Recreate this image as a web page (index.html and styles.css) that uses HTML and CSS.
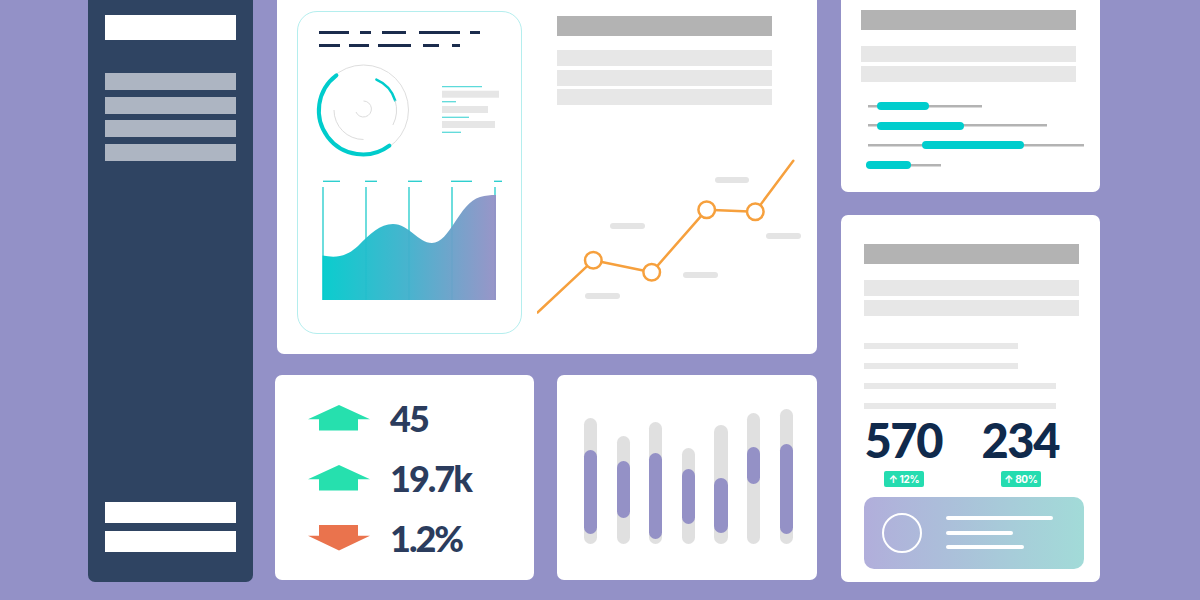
FILE: index.html
```html
<!DOCTYPE html>
<html lang="en">
<head>
<meta charset="utf-8">
<title>Dashboard</title>
<link rel="stylesheet" href="styles.css">
</head>
<body>
<div class="board">
  <aside class="sidebar">
    <div class="sb-logo"></div>
    <nav class="sb-menu"><span></span><span></span><span></span><span></span></nav>
    <div class="sb-foot"><span></span><span></span></div>
  </aside>

  <main class="center">
    <section class="card overview">
      <div class="tablet">
        <svg class="tab-head" viewBox="298 12 223 48" width="223" height="48">
          <g stroke="#1b2c4d" stroke-width="3">
            <line x1="319" y1="32.5" x2="349" y2="32.5"/>
            <line x1="360" y1="32.5" x2="371" y2="32.5"/>
            <line x1="382" y1="32.5" x2="406" y2="32.5"/>
            <line x1="419" y1="32.5" x2="460" y2="32.5"/>
            <line x1="470" y1="32.5" x2="480" y2="32.5"/>
            <line x1="319" y1="45.5" x2="340" y2="45.5"/>
            <line x1="349" y1="45.5" x2="369" y2="45.5"/>
            <line x1="378" y1="45.5" x2="411" y2="45.5"/>
            <line x1="423" y1="45.5" x2="439" y2="45.5"/>
            <line x1="452" y1="45.5" x2="460" y2="45.5"/>
          </g>
        </svg>
        <svg class="tab-donut" viewBox="298 60 223 110" width="223" height="110">
          <circle cx="363.5" cy="110" r="45" fill="none" stroke="#dedede" stroke-width="1"/>
          <path d="M389.4 145.6 A44 44 0 0 1 336.4 75.3" fill="none" stroke="#00cccc" stroke-width="4" stroke-linecap="round"/>
          <path d="M376.4 79.6 A33 33 0 0 1 395.1 100.4" fill="none" stroke="#00cccc" stroke-width="2.5" stroke-linecap="round"/>
          <path d="M395.1 100.4 A33 33 0 0 1 392.9 125" fill="none" stroke="#dcdcdc" stroke-width="1"/>
          <path d="M363.5 139.5 A29.5 29.5 0 0 1 334 110" fill="none" stroke="#dcdcdc" stroke-width="1"/>
          <path d="M363.5 101 A8 8 0 1 1 356 112" fill="none" stroke="#dcdcdc" stroke-width="1"/>
          <g stroke="#5cdada" stroke-width="1.3">
            <line x1="442" y1="86.7" x2="482" y2="86.7"/>
            <line x1="442" y1="101.7" x2="456" y2="101.7"/>
            <line x1="442" y1="117.3" x2="469" y2="117.3"/>
            <line x1="442" y1="132.3" x2="461" y2="132.3"/>
          </g>
          <g fill="#e6e6e6">
            <rect x="442" y="90.7" width="57" height="7"/>
            <rect x="442" y="106" width="46" height="7"/>
            <rect x="442" y="121" width="53" height="7"/>
          </g>
        </svg>
        <svg class="tab-area" viewBox="298 170 223 145" width="223" height="145">
          <defs>
            <linearGradient id="areaFill" x1="0" y1="0" x2="1" y2="0">
              <stop offset="0" stop-color="#00cbcc"/>
              <stop offset="0.5" stop-color="#42b0cc"/>
              <stop offset="1" stop-color="#9591c6"/>
            </linearGradient>
          </defs>
          <g stroke="#2ecfcf" stroke-width="1.4">
            <line x1="323" y1="181.3" x2="340" y2="181.3"/>
            <line x1="365" y1="181.3" x2="377" y2="181.3"/>
            <line x1="408" y1="181.3" x2="422" y2="181.3"/>
            <line x1="451" y1="181.3" x2="472" y2="181.3"/>
            <line x1="494" y1="181.3" x2="502" y2="181.3"/>
            <line x1="323" y1="187" x2="323" y2="300"/>
            <line x1="366" y1="187" x2="366" y2="300"/>
            <line x1="409" y1="187" x2="409" y2="300"/>
            <line x1="452" y1="187" x2="452" y2="300"/>
            <line x1="495" y1="187" x2="495" y2="300"/>
          </g>
          <path d="M322.5 300 V255.5 C336 258 346 257 358 246 C370 234 380 224 393 224 C409 224 418 243 432 243 C450 243 459 203 480 197 C486 195.5 490 195 496 195 V300 Z" fill="url(#areaFill)" opacity="0.96"/>
        </svg>
      </div>

      <div class="trend">
        <div class="title-bar"></div>
        <div class="lines"><span></span><span></span><span></span></div>
        <svg class="trend-chart" viewBox="537 155 265 162" width="265" height="162">
          <g fill="#e4e4e4">
            <rect x="715" y="177" width="34" height="6" rx="3"/>
            <rect x="610" y="223" width="35" height="6" rx="3"/>
            <rect x="766" y="233" width="35" height="6" rx="3"/>
            <rect x="683" y="272" width="35" height="6" rx="3"/>
            <rect x="585" y="293" width="35" height="6" rx="3"/>
          </g>
          <polyline points="537.5,312.5 593.3,260.3 651.7,272.3 706.7,209.7 755.3,211.7 793.3,160.7" fill="none" stroke="#f6a03d" stroke-width="2.5" stroke-linecap="round" stroke-linejoin="round"/>
          <g fill="#fff" stroke="#f6a03d" stroke-width="2.5">
            <circle cx="593.3" cy="260.3" r="8.3"/>
            <circle cx="651.7" cy="272.3" r="8.3"/>
            <circle cx="706.7" cy="209.7" r="8.3"/>
            <circle cx="755.3" cy="211.7" r="8.3"/>
          </g>
        </svg>
      </div>
    </section>

    <div class="center-row">
      <section class="card stats">
        <div class="stat">
          <svg viewBox="0 0 62 26" width="62" height="26"><polygon points="31,0 62,14.3 50,14.3 50,25.6 11,25.6 11,14.3 0,14.3" fill="#26e0ae"/></svg>
          <b>45</b>
        </div>
        <div class="stat">
          <svg viewBox="0 0 62 26" width="62" height="26"><polygon points="31,0 62,14.3 50,14.3 50,25.6 11,25.6 11,14.3 0,14.3" fill="#26e0ae"/></svg>
          <b>19.7k</b>
        </div>
        <div class="stat">
          <svg viewBox="0 0 62 26" width="62" height="26"><polygon points="11,0 50,0 50,10.7 62,10.7 31,25.5 0,10.7 11,10.7" fill="#ea734d"/></svg>
          <b>1.2%</b>
        </div>
      </section>

      <section class="card bars">
        <div class="track" style="height:126px"><i style="margin-top:32px;height:84px"></i></div>
        <div class="track" style="height:108px"><i style="margin-top:25px;height:57px"></i></div>
        <div class="track" style="height:122px"><i style="margin-top:31px;height:86px"></i></div>
        <div class="track" style="height:96px"><i style="margin-top:21px;height:55px"></i></div>
        <div class="track" style="height:119px"><i style="margin-top:53px;height:55px"></i></div>
        <div class="track" style="height:131px"><i style="margin-top:34px;height:37px"></i></div>
        <div class="track" style="height:135px"><i style="margin-top:35px;height:90px"></i></div>
      </section>
    </div>
  </main>

  <div class="right">
    <section class="card progress">
      <div class="title-bar"></div>
      <div class="lines"><span></span><span></span></div>
      <div class="sliders">
        <div class="slider" style="width:114px"><i style="margin-left:9px;width:52px"></i></div>
        <div class="slider" style="width:179px"><i style="margin-left:9px;width:87px"></i></div>
        <div class="slider" style="width:216px"><i style="margin-left:54px;width:102px"></i></div>
        <div class="slider" style="width:75px;margin-left:-2px"><i style="margin-left:0;width:45px"></i></div>
      </div>
    </section>

    <section class="card summary">
      <div class="title-bar"></div>
      <div class="lines"><span></span><span></span></div>
      <div class="thin"><span class="short"></span><span class="short"></span><span></span><span></span></div>
      <div class="kpis">
        <div class="kpi"><b>570</b><span class="badge">↑ 12%</span></div>
        <div class="kpi"><b>234</b><span class="badge">↑ 80%</span></div>
      </div>
      <div class="profile">
        <div class="avatar"></div>
        <div class="profile-lines"><span class="l1"></span><span class="l2"></span><span class="l3"></span></div>
      </div>
    </section>
  </div>
</div>
</body>
</html>
```

FILE: styles.css
```css
html, body {
  margin: 0;
  height: 600px;
  overflow: hidden;
  background: #9391c7;
  font-family: Inter, "Noto Sans", sans-serif;
}

svg { display: block; }

.board {
  display: grid;
  grid-template-columns: 165px 540px 259px;
  column-gap: 24px;
  align-items: start;
  margin: -20px 0 0 88px;
}

/* Sidebar */
.sidebar {
  height: 602px;
  box-sizing: border-box;
  background: #2f4462;
  border-radius: 0 0 7px 7px;
  padding: 35px 17px 30px;
  display: flex;
  flex-direction: column;
}
.sb-logo { height: 25px; background: #fff; }
.sb-menu {
  margin-top: 33px;
  display: flex;
  flex-direction: column;
  gap: 6.5px;
}
.sb-menu span { height: 17px; background: #adb5c2; }
.sb-foot {
  margin-top: auto;
  display: flex;
  flex-direction: column;
  gap: 8px;
}
.sb-foot span { height: 21px; background: #fff; }

/* Cards */
.card {
  background: #fff;
  border-radius: 7px;
  box-sizing: border-box;
}

.center {
  display: flex;
  flex-direction: column;
  gap: 21px;
}

.overview {
  height: 374px;
  display: flex;
  align-items: flex-start;
  gap: 15px;
  padding: 31px 0 0 20px;
}

.tablet {
  width: 225px;
  height: 323px;
  box-sizing: border-box;
  border: 1px solid #b4eeee;
  border-radius: 20px;
  display: flex;
  flex-direction: column;
}

.trend {
  width: 265px;
  display: flex;
  flex-direction: column;
}
.title-bar {
  width: 215px;
  height: 20px;
  background: #b3b3b3;
}
.trend .title-bar { margin: 5px 0 0 20px; }
.lines {
  width: 215px;
  display: flex;
  flex-direction: column;
  gap: 3.5px;
}
.lines span { height: 16px; background: #e7e7e7; }
.trend .lines { margin: 14px 0 0 20px; }
.trend-chart { margin-top: 50px; }

.center-row {
  display: flex;
  gap: 23px;
  margin-left: -2px;
}

/* Stats */
.stats {
  width: 259px;
  height: 205px;
  padding: 25px 0 0 33px;
  display: flex;
  flex-direction: column;
  gap: 24px;
}
.stat {
  height: 36px;
  display: flex;
  align-items: center;
  gap: 20px;
}
.stat b {
  font-family: Lato, Inter, sans-serif;
  font-size: 36px;
  line-height: 1;
  font-weight: 900;
  color: #2b3c5d;
  letter-spacing: -2px;
}

/* Bars */
.bars {
  width: 260px;
  height: 205px;
  padding: 0 0 36px 27px;
  display: flex;
  align-items: flex-end;
  gap: 19.3px;
}
.track {
  width: 13.3px;
  border-radius: 7px;
  background: #e0e0e0;
  display: flex;
  flex-direction: column;
}
.track i {
  display: block;
  border-radius: 7px;
  background: #9491c6;
}

/* Right column */
.right {
  display: flex;
  flex-direction: column;
  gap: 23px;
}

.progress {
  height: 212px;
  padding: 30px 0 0 20px;
}
.progress .lines { margin-top: 16px; gap: 4px; }
.sliders {
  margin-top: 20px;
  padding-left: 7px;
  display: flex;
  flex-direction: column;
  gap: 11.7px;
}
.slider {
  height: 8px;
  background: linear-gradient(#b3b3b3, #b3b3b3) center / 100% 2.5px no-repeat;
  display: flex;
}
.slider i {
  display: block;
  height: 8px;
  border-radius: 4px;
  background: #00cdcd;
}

.summary {
  height: 367px;
  padding: 29px 21px 0 23px;
  display: flex;
  flex-direction: column;
}
.summary .title-bar { height: 19.5px; }
.summary .lines { margin-top: 16px; gap: 4px; }
.thin {
  margin-top: 27px;
  display: flex;
  flex-direction: column;
  gap: 14px;
}
.thin span { height: 6px; width: 192px; background: #e8e8e8; }
.thin span.short { width: 154px; }

.kpis {
  margin-top: 7px;
  display: flex;
  gap: 37px;
}
.kpi {
  width: 80px;
  display: flex;
  flex-direction: column;
  align-items: center;
}
.kpi b {
  font-family: Lato, Inter, sans-serif;
  font-size: 47px;
  line-height: 1;
  font-weight: 900;
  color: #102a4c;
  letter-spacing: -1.5px;
  text-indent: -1.5px;
  white-space: nowrap;
  position: relative;
  top: 1px;
}
.badge {
  margin-top: 8px;
  width: 40px;
  height: 16px;
  border-radius: 2px;
  background: #25dcb0;
  color: #fff;
  font-size: 10px;
  font-weight: 700;
  line-height: 16px;
  text-align: center;
  letter-spacing: -0.3px;
}

.profile {
  margin-top: 10px;
  width: 220px;
  height: 72px;
  box-sizing: border-box;
  border-radius: 10px;
  background: linear-gradient(90deg, #b1aedb, #a2dbd8);
  display: flex;
  align-items: center;
  padding-left: 18px;
  gap: 24px;
}
.avatar {
  width: 40px;
  height: 40px;
  box-sizing: border-box;
  border: 2px solid #fff;
  border-radius: 50%;
}
.profile-lines {
  display: flex;
  flex-direction: column;
  gap: 10.4px;
}
.profile-lines span { height: 4px; border-radius: 2px; background: #fff; }
.profile-lines .l1 { width: 107px; }
.profile-lines .l2 { width: 67px; }
.profile-lines .l3 { width: 78px; }
```
